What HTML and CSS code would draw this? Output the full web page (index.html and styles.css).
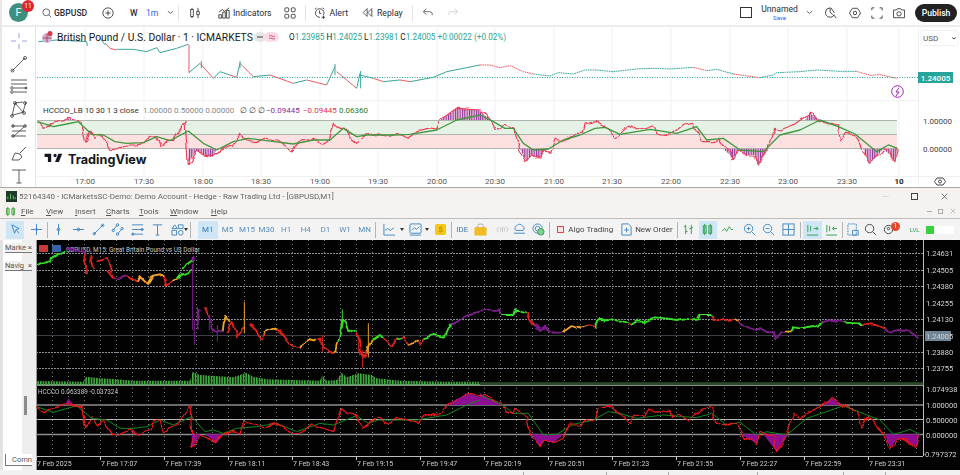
FILE: index.html
```html
<!DOCTYPE html>
<html lang="en">
<head>
<meta charset="utf-8">
<title>GBPUSD</title>
<link rel="stylesheet" href="styles.css">
</head>
<body>
<div class="page">
<section class="tv">
  <header class="tv-top">
    <div class="avatar">F<span class="avatar-badge">11</span></div>
    <div class="tv-item symbol">
      <svg class="ic14 sm" viewBox="0 0 14 14"><circle cx="6" cy="6" r="4.800"/><path d="M9.500 9.500L13 13"/></svg><b>GBPUSD</b>
    </div>
    <svg class="ic14 plus" viewBox="0 0 14 14"><circle cx="7" cy="7" r="6"/><path d="M7 4v6M4 7h6"/></svg>
    <span class="tf-w">W</span><span class="tf-m">1m</span>
    <svg class="chev c1" viewBox="0 0 8 5"><path d="M1 1l3 2.500L7 1"/></svg>
    <i class="tv-sep s1"></i>
    <svg class="ic14 candle" viewBox="0 0 14 14"><path d="M3.500 1v12M10.500 1v12"/><rect x="2" y="3" width="3" height="8" fill="#fff"/><path d="M9 5h3v4H9z" fill="#fff"/></svg>
    <div class="tv-item ind">
      <svg class="ic14" viewBox="0 0 14 14"><path d="M1 13V9h3v4zM5.500 13V6h3v7zM10 13V4h3v9z"/><path d="M1 6l4-3 3 2 5-4"/></svg><span>Indicators</span>
    </div>
    <svg class="ic14 grid4" viewBox="0 0 14 14"><rect x="1" y="1" width="4.500" height="4.500" rx="1"/><rect x="8.500" y="1" width="4.500" height="4.500" rx="1"/><rect x="1" y="8.500" width="4.500" height="4.500" rx="1"/><rect x="8.500" y="8.500" width="4.500" height="4.500" rx="1"/></svg>
    <i class="tv-sep s2"></i>
    <div class="tv-item alert">
      <svg class="ic14" viewBox="0 0 14 14"><path d="M11 9.500A5 5 0 1 0 7 12M6.500 4v3.500h2M1 2.500L3 1M12 2.500L10 1M11 10v4M9 12h4"/></svg><span>Alert</span>
    </div>
    <div class="tv-item replay">
      <svg class="ic14 sm1" viewBox="0 0 14 14"><path d="M6.500 2L1.500 7l5 5zM12.500 2l-5 5 5 5z"/></svg><span>Replay</span>
    </div>
    <i class="tv-sep s3"></i>
    <svg class="ic14 undo" viewBox="0 0 14 14"><path d="M5 2L1.500 5.500 5 9M2 5.500h7q3 0 3 3v1"/></svg>
    <svg class="ic14 redo" viewBox="0 0 14 14"><path d="M9 2l3.500 3.500L9 9M12 5.500H5q-3 0-3 3v1"/></svg>
    <div class="tv-right">
      <i class="layout-box"></i>
      <div class="unnamed"><span>Unnamed</span><em>Save</em></div>
      <svg class="chev c2" viewBox="0 0 8 5"><path d="M1 1l3 2.500L7 1"/></svg>
      <svg class="ic14 rr1" viewBox="0 0 14 14"><path d="M6 1a5.500 5.500 0 1 0 5 8M6 1v5l3 3M7 1l4 6M10 9l3 4"/></svg>
      <svg class="ic14 rr1" viewBox="0 0 14 14"><path d="M4 1.500h6L13.500 7 10 12.500H4L.5 7z"/><circle cx="7" cy="7" r="2"/></svg>
      <svg class="ic14 rr2" viewBox="0 0 14 14"><path d="M1 4V1h3M10 1h3v3M13 10v3h-3M4 13H1v-3"/></svg>
      <svg class="ic14 rr2" viewBox="0 0 14 14"><path d="M.5 3.500h3.500L5 2h4l1 1.500h3.500v9H.5z"/><circle cx="7" cy="8" r="2.500"/></svg>
      <button class="publish">Publish</button>
    </div>
  </header>
  <div class="tv-body">
    <aside class="tv-left">
      <svg class="tool" viewBox="0 0 20 20"><path class="cross" d="M10 2v5M10 13v5M2 10h5M13 10h5"/></svg>
      <svg class="tool" viewBox="0 0 20 20"><path d="M3 17L16 4"/><circle cx="3.500" cy="16.500" r="1.500"/><circle cx="16" cy="4" r="1.500"/></svg>
      <svg class="tool" viewBox="0 0 20 20"><path d="M2 4h16M2 8h16M5 12h13M5 16h13"/><circle cx="3" cy="12" r="1.300"/><circle cx="3" cy="16" r="1.300"/><circle cx="17" cy="12" r="1"/></svg>
      <svg class="tool" viewBox="0 0 20 20"><path d="M3 17L6 4l8 9L17 3M4 16l11-3M6 4l8-1"/><circle cx="6" cy="4" r="1.400"/><circle cx="3" cy="17" r="1.400"/><circle cx="15" cy="14" r="1.400"/><circle cx="16" cy="4" r="1.400"/></svg>
      <svg class="tool" viewBox="0 0 20 20"><path d="M3 5h14M3 10h14M3 15h14M5 15l10-9"/><circle cx="4" cy="5" r="1.300"/><circle cx="4" cy="15" r="1.300"/><circle cx="16" cy="5" r="1.300"/></svg>
      <svg class="tool" viewBox="0 0 20 20"><path d="M3 16l3-7 5 1 2 3-3 3zM11 9l6-6"/></svg>
      <svg class="tool" viewBox="0 0 20 20"><path d="M3 4h14M10 4v13M7.500 17h5"/></svg>
    </aside>
    <svg class="tv-chart" viewBox="36 27 924 160">
      <defs>
        <pattern id="stripes" patternUnits="userSpaceOnUse" width="7" height="8"><rect width="7" height="8" fill="#e6bfd8"/><rect width="3" height="8" fill="#8c2f96"/></pattern>
        <pattern id="volbars" patternUnits="userSpaceOnUse" width="8" height="8"><rect width="5" height="8" fill="#3fae3f"/></pattern>
        <filter id="jag" filterUnits="userSpaceOnUse" primitiveUnits="userSpaceOnUse" x="-200" y="-200" width="3400" height="1400"><feTurbulence type="fractalNoise" baseFrequency=".035" numOctaves="1" seed="4" result="n"/><feDisplacementMap in="SourceGraphic" in2="n" scale="22" xChannelSelector="R" yChannelSelector="G"/></filter>
      </defs>
      <path class="tv-grid" d="M85 27v149M144 27v149M203 27v149M261 27v149M320 27v149M378 27v149M437 27v149M495 27v149M554 27v149M612 27v149M671 27v149M730 27v149M788 27v149M847 27v149M899 27v149M37 100.500h881M918.500 27v160M37 176.500h923"/>
      <path class="tv-last" d="M37 77.500h881"/>
      <g transform="scale(.33333)">
        <path class="tv-price up" d="M115 125L170 120 260 125 262 138M300 115L316 135M350 148L400 148 440 155 470 143 480 158 530 145 565 133"/>
        <path class="tv-price dn" d="M316 130L330 145 350 150M567 133V218M600 190L640 235M690 225L710 232M720 190L760 230M810 225L880 250M920 240L980 255M1010 215L1070 265M1120 235L1150 245M1200 240L1230 245"/>
        <path class="tv-price up" d="M567 218L600 190M604 183V205M640 235L660 215L690 225M710 232L720 190M720 183V205M760 230L810 225M880 250L920 240M980 255L1005 200M1005 192V225M1070 265L1080 220M1082 213V265M1080 225L1120 235M1150 245L1200 240M1230 245L1300 232L1340 215L1440 195"/>
        <path class="tv-price dn dash" d="M1440 195L1470 195 1500 203 1530 197 1570 215 1600 222"/>
        <path class="tv-price up dash" d="M1600 222L1650 228 1675 218 1720 222 1755 210 1790 210 1840 215 1910 207 1960 205 2010 207 2080 202"/>
        <path class="tv-price dn dash" d="M2080 202L2120 212M2200 222L2280 233"/>
        <path class="tv-price up dash" d="M2120 212L2150 208 2200 222M2280 233L2320 225 2330 218 2400 215 2450 210 2520 214 2570 214"/>
        <path class="tv-price dn dash" d="M2570 214L2610 226 2640 224 2690 235"/>
      </g>
      <rect class="band-g" x="37" y="120" width="860" height="14.300"/>
      <rect class="band-r" x="37" y="134.300" width="860" height="14.400"/>
      <path class="band-line" d="M37 120.500h860M37 134.500h860M37 148.500h860"/>
      <g transform="translate(0,100) scale(.33333)">
        <path class="hist" d="M195 60L205 55 220 60zM565 146V190L590 150 610 165 640 170 650 146zM1320 60L1370 25 1440 30V60z"/>
        <path class="osc-r" d="M112 65L135 85 150 72 190 62 205 55 240 65 255 127 270 90 285 115 305 105 330 148 355 150 380 135 410 135 440 130 450 108 470 107 480 142 500 120 520 122 555 65 565 190 590 150 610 165 640 170 660 150 680 140 700 135 720 105 745 120 770 125 800 115 830 120 875 150 900 125 940 115 970 130 985 120 1000 70 1020 85 1040 85 1050 115 1070 130 1100 105 1130 100 1160 108 1190 100 1225 115 1240 95 1280 85 1310 90 1320 60 1370 25 1440 30"/>
        <path class="osc-g" d="M112 65L160 80 200 72 235 65 275 103 310 105 345 125 380 130 430 128 470 110 510 122 565 93 610 130 650 150 700 125 745 115 800 122 880 132 940 120 990 120 1030 85 1070 110 1100 105 1180 105 1230 103 1310 90 1370 60 1440 45"/>
      </g>
      <g transform="translate(480,100) scale(.33333)">
        <path class="hist" d="M0 35V60H35zM120 146L140 185 155 165 180 175 190 155 210 146zM730 146L760 175 780 150 800 165 825 165 835 195 860 146zM975 60L990 40 1020 60zM1150 146L1165 190 1190 170 1210 146 1225 160 1245 185 1252 146z"/>
        <path class="osc-r" d="M0 35L20 45 35 65 45 85 65 88 75 72 100 85 120 150 140 185 155 165 180 175 190 155 210 160 225 115 255 120 285 100 310 100 315 72 350 65 375 80 405 115 420 95 450 75 470 90 520 75 530 100 570 105 610 75 635 70 650 90 670 125 700 125 720 115 760 175 780 150 800 165 825 165 835 195 860 150 885 85 900 90 940 75 990 40 1020 60 1040 70 1075 78 1082 125 1100 100 1125 105 1165 190 1190 170 1210 145 1225 160 1245 185 1252 145"/>
        <path class="osc-g" d="M0 45L40 65 75 85 100 85 130 130 160 150 205 147 250 120 300 105 345 85 375 82 420 103 510 88 590 100 650 80 680 120 730 115 780 150 850 155 900 105 960 90 1020 60 1075 80 1125 102 1190 155 1225 135 1252 145"/>
      </g>
      <g class="flag"><circle cx="47" cy="38" r="5" fill="#c8b6d6"/><circle cx="50" cy="33.500" r="2.500" fill="#d23b4a"/><path d="M43 38h8M47 34v8" stroke="#c23b5a"/></g>
      <text class="tv-title" x="57" y="41">British Pound / U.S. Dollar · 1 · ICMARKETS</text>
      <rect class="pill-a" x="254" y="32" width="12" height="10" rx="5"/>
      <rect class="pill-b" x="264" y="32" width="15" height="10" rx="5"/>
      <path class="pill-a-g" d="M257 37h6"/>
      <path class="pill-b-g" d="M269 36q1.500-1 3 0t3 0M269 38.500q1.500-1 3 0t3 0"/>
      <text class="ohlc" x="289" y="40"><tspan class="blk">O</tspan>1.23985 <tspan class="blk">H</tspan>1.24025 <tspan class="blk">L</tspan>1.23981 <tspan class="blk">C</tspan>1.24005 +0.00022 (+0.02%)</text>
      <text class="ind-t" x="43" y="113">HCCCO_LB 10 30 1 3 close</text>
      <text class="ind-g" x="143" y="113">1.00000 0.50000 0.00000</text>
      <text class="ind-t" x="240" y="113">∅ ∅ ∅</text>
      <text class="ind-p" x="266" y="113">−0.09445</text>
      <text class="ind-r" x="303" y="113">−0.09445</text>
      <text class="ind-gr" x="339" y="113">0.06360</text>
      <path class="logo-tv" transform="translate(43.500,150.500) scale(.55)" d="M14 6H2v6h6v9h6V6zm14 15h-7l6-15h7l-6 15zm-7-9a3 3 0 1 0 0-6 3 3 0 0 0 0 6z"/>
      <text class="logo-text" x="68" y="163.500">TradingView</text>
      <g class="time">
        <text x="85" y="184">17:00</text><text x="144" y="184">17:30</text><text x="203" y="184">18:00</text><text x="261" y="184">18:30</text><text x="320" y="184">19:00</text><text x="378" y="184">19:30</text><text x="437" y="184">20:00</text><text x="495" y="184">20:30</text><text x="554" y="184">21:00</text><text x="612" y="184">21:30</text><text x="671" y="184">22:00</text><text x="730" y="184">22:30</text><text x="788" y="184">23:00</text><text x="847" y="184">23:30</text><text class="ten" x="899" y="184">10</text>
      </g>
      <rect class="usd-box" x="921" y="30.500" width="37" height="15" rx="2"/>
      <text class="usd" x="923" y="41">USD</text>
      <path class="usd-ch" d="M952 37.500l2 1.500 2-1.500"/>
      <rect class="tag" x="918" y="72" width="35" height="11"/>
      <text class="tag-t" x="935.500" y="80.500">1.24005</text>
      <text class="axis" x="923" y="124">1.00000</text>
      <text class="axis" x="923" y="152">0.00000</text>
      <circle class="bolt-c" cx="897.500" cy="91.500" r="5.800"/>
      <path class="bolt" d="M899 87.500L896 92h3l-3 4"/>
      <path class="gear" d="M937 178h6l2.500 3.500-2.500 3.500h-6l-2.500-3.500z"/>
      <circle class="gear" cx="940" cy="181.500" r="1.500"/>
    </svg>
  </div>
</section>
<section class="mt">
  <div class="mt-title">
    <svg class="mt-logo" viewBox="0 0 12 12"><rect width="12" height="12" fill="#1d3a2a"/><path d="M2 9V6M5 9V3M8 9V5M10 9V7" stroke="#6fcf6f"/></svg>
    <span>52164340 - ICMarketsSC-Demo: Demo Account - Hedge - Raw Trading Ltd - [GBPUSD,M1]</span>
    <div class="win-btns"><i class="wb-min"></i><i class="wb-max"></i><svg class="wb-x" viewBox="0 0 10 10"><path d="M1 1l8 8M9 1L1 9"/></svg></div>
  </div>
  <div class="mt-menu">
    <svg class="mt-menuicon" viewBox="0 0 12 12"><path d="M3 1v10M9 1v10"/><rect x="1.500" y="3" width="3" height="6"/><rect x="7.500" y="3" width="3" height="6"/></svg>
    <nav class="menu-items m1"><u>F</u>ile</nav>
    <nav class="menu-items m2"><u>V</u>iew</nav>
    <nav class="menu-items m3"><u>I</u>nsert</nav>
    <nav class="menu-items m4"><u>C</u>harts</nav>
    <nav class="menu-items m5"><u>T</u>ools</nav>
    <nav class="menu-items m6"><u>W</u>indow</nav>
    <nav class="menu-items m7"><u>H</u>elp</nav>
    <div class="sub-btns"><i class="sb-min"></i><i class="sb-res"></i><svg class="sb-x" viewBox="0 0 8 8"><path d="M1 1l6 6M7 1L1 7"/></svg></div>
  </div>
  <div class="mt-tools">
    <span class="tb hl w18"><svg class="ti" viewBox="0 0 14 14"><path d="M3 2l8 4-3.500 1.200L6 11z"/><path d="M8 8l3 3"/></svg></span>
    <span class="tb w24"><svg class="ti" viewBox="0 0 14 14"><path d="M7 1v12M1 7h12"/><circle cx="7" cy="7" r="1"/></svg></span>
    <i class="mt-sep tight"></i>
    <span class="tb w20"><svg class="ti" viewBox="0 0 14 14"><path d="M7 1v12"/><circle cx="7" cy="7" r="1.500"/></svg></span>
    <span class="tb w20"><svg class="ti" viewBox="0 0 14 14"><path d="M1 7h12"/><circle cx="7" cy="7" r="1.500"/></svg></span>
    <span class="tb w20"><svg class="ti" viewBox="0 0 14 14"><path d="M2 12L12 2"/><circle cx="2.500" cy="11.500" r="1.300"/><circle cx="11.500" cy="2.500" r="1.300"/></svg></span>
    <span class="tb w19"><svg class="ti" viewBox="0 0 14 14"><path d="M2 8l5-6M7 12l5-6"/><circle cx="2.500" cy="8" r="1.300"/><circle cx="7" cy="12" r="1.300"/><circle cx="7" cy="2" r="1.300"/><circle cx="12" cy="6" r="1.300"/></svg></span>
    <span class="tb w20"><svg class="ti" viewBox="0 0 14 14"><path d="M1 2h12M1 7h12M1 12h12"/><circle cx="2" cy="12" r="1.200"/><circle cx="12" cy="7" r="1.200"/></svg></span>
    <span class="tb w20"><svg class="ti" viewBox="0 0 14 14"><path d="M2 2h10M7 2v11M5 13h4"/></svg></span>
    <span class="tb w20"><svg class="ti" viewBox="0 0 14 14"><path d="M1 6l3-4 3 4zM8 2h5v4H8zM1 8h5v5H1z"/><circle cx="10.500" cy="10.500" r="2.500"/></svg></span>
    <i class="arrow pull"></i>
    <i class="mt-sep ml2 mr7"></i>
    <span class="tf hl">M1</span><span class="tf">M5</span><span class="tf">M15</span><span class="tf">M30</span><span class="tf">H1</span><span class="tf">H4</span><span class="tf">D1</span><span class="tf">W1</span><span class="tf">MN</span>
    <i class="mt-sep ml1"></i>
    <span class="tb w20 ml3"><svg class="ti" viewBox="0 0 14 14"><path d="M1 1v12h12"/><path d="M2 8l3-2 3 2 4-3"/></svg></span>
    <i class="arrow ml1"></i>
    <span class="tb w20 ml1"><svg class="ti" viewBox="0 0 14 14"><rect x="1" y="1" width="12" height="10" rx="1"/><path d="M3 8l3-3 2 2 3-3M1 13h12"/></svg></span>
    <i class="arrow"></i>
    <span class="coin ml6">$</span>
    <i class="mt-sep ml5"></i>
    <span class="ide">IDE</span>
    <span class="tb w16"><svg class="ti" viewBox="0 0 14 14"><path class="lock" d="M1 5h12v8H1z"/><path class="lock-s" d="M4 5V3q0-2 3-2t3 2v2"/></svg></span>
    <span class="tb w16 ml6"><svg class="ti dim" viewBox="0 0 14 14"><path d="M3 4l-2 3 2 3M11 4l2 3-2 3M5 5v4M7 4v6M9 5v4"/></svg></span>
    <span class="tb w18"><svg class="ti" viewBox="0 0 14 14"><path d="M3 8a3 3 0 0 1 1-5 3.500 3.500 0 0 1 6 0 3 3 0 0 1 1 5zM1 11h12"/></svg></span>
    <span class="tb w20"><svg class="ti" viewBox="0 0 14 14"><circle cx="6" cy="6" r="5"/><circle cx="6" cy="6" r="2.500"/><circle class="gdot" cx="9.500" cy="9.500" r="3.500"/></svg></span>
    <i class="mt-sep ml1"></i>
    <span class="algo ml7"><i class="algo-box"></i>Algo Trading</span>
    <span class="neworder ml7"><svg class="ti" viewBox="0 0 14 14"><path d="M2 1h7l3 3v9H2z"/><path d="M7 5v5M4.500 7.500h5"/></svg>New Order</span>
    <i class="mt-sep ml4"></i>
    <span class="tb w20 ml1"><svg class="ti g" viewBox="0 0 14 14"><path d="M4 2v10M2 4h2M4 9h2M10 2v10M8 6h2M10 5h2"/></svg></span>
    <span class="tb hl w18"><svg class="ti g" viewBox="0 0 14 14"><path d="M4 1v12M10 1v12"/><rect x="2.500" y="3" width="3" height="8"/><rect x="8.500" y="3" width="3" height="8"/></svg></span>
    <span class="tb w20 ml1"><svg class="ti g" viewBox="0 0 14 14"><path d="M1 9l3-3 2 3 3-5 2 3h2"/></svg></span>
    <span class="tb w22 ml1"><svg class="ti" viewBox="0 0 14 14"><circle cx="6" cy="6" r="4.500"/><path d="M4 6h4M6 4v4M9.500 9.500L13 13"/></svg></span>
    <span class="tb w16"><svg class="ti" viewBox="0 0 14 14"><circle cx="6" cy="6" r="4.500"/><path d="M4 6h4M9.500 9.500L13 13"/></svg></span>
    <span class="tb w20 ml2"><svg class="ti" viewBox="0 0 14 14"><rect x="1" y="1" width="12" height="12"/><path d="M7 1v12M1 7h12"/></svg></span>
    <i class="mt-sep ml1"></i>
    <span class="tb hl w19 ml2"><svg class="ti g" viewBox="0 0 14 14"><path d="M2 2v8M5 3v6M8 6h5M11 4l2 2-2 2M1 13h12"/></svg></span>
    <span class="tb w20"><svg class="ti g" viewBox="0 0 14 14"><path d="M2 2v8M5 3v6M8 6h5M10 4L8 6l2 2M1 13h12"/></svg></span>
    <i class="mt-sep"></i>
    <span class="tb w18 ml2"><svg class="ti" viewBox="0 0 14 14"><path stroke-dasharray="2 1" d="M1 1h9v12H1z"/><path d="M6 8h6v5H6z"/></svg></span>
    <span class="tb w16"><svg class="ti k" viewBox="0 0 14 14"><circle cx="6" cy="6" r="4.500"/><path d="M9.500 9.500L13 13"/></svg></span>
    <span class="tb w20 badge-host"><svg class="ti k" viewBox="0 0 14 14"><circle cx="7" cy="7" r="4.500"/><circle cx="7" cy="6" r="1.300"/></svg><span class="mt-badge">1</span></span>
    <span class="lvl ml11">LVL</span>
    <i class="lvl-g"></i><i class="lvl-w"></i>
  </div>
  <div class="mt-main">
    <aside class="mt-left">
      <div class="dock"><span>Marke</span><b>×</b></div>
      <div class="dock d2"><span>Navig</span><b>×</b></div>
      <i class="dock-scroll"></i>
      <div class="comn">Comn</div>
    </aside>
    <svg class="mt-chart" viewBox="36 240 924 230">
      <defs>
        <pattern id="dotv" patternUnits="userSpaceOnUse" x="52" y="240" width="16" height="4"><rect width="1" height="1" fill="#77807a"/></pattern>
      </defs>
      <rect class="mt-bg" x="36" y="240" width="924" height="230"/>
      <rect fill="url(#dotv)" x="36" y="240" width="887" height="216"/>
      <path class="h-dot" d="M36 253.500h887M36 270.500h887M36 286.500h887M36 319.500h887M36 352.500h887M36 368.500h887"/>
      <path class="h-sol" d="M36 335.500h887"/>
      <path class="frame" d="M36.500 240v230"/>
      <path class="frame-r" d="M923.500 240v216M36 456.500h887"/>
      <path class="sepbar" d="M36 385h887"/>
      <rect class="flag1" x="39" y="245" width="9" height="7"/>
      <rect class="flag2" x="52" y="245" width="9" height="7"/>
      <text class="mt-label" x="66" y="252">GBPUSD, M15: Great Britain Pound vs US Dollar</text>

      <g transform="scale(.33333)">
        <path class="s g1" d="M114 795L150 780 195 750M550 810L565 790 578 780"/>
        <path class="s p1" d="M200 745L225 750 250 760M578 815V770"/>
        <path class="s r1" d="M250 760L258 790M258 825V775M270 760L280 810M290 785L320 775 335 815"/>
      </g>
      <g transform="translate(0,270) scale(.33333)">
        <path class="s r1" d="M320 0L340 25M380 15L410 35M425 25L445 45M490 15L495 50 520 35"/>
        <path class="s p1" d="M340 25L360 25 380 15M600 120L590 175M625 135L640 180 652 190 665 185"/>
        <path class="s o1" d="M410 35L420 20 435 35 445 45M445 45L460 20 485 15 490 15M520 35L535 30"/>
        <path class="s g1" d="M535 30L550 10 575 0"/>
        <path class="w p1" d="M578 0V180M583 150V225M592 110V175M628 135V180M652 165V215"/>
        <path class="s r1" d="M612 105L620 130 625 135"/>
        <path class="s o1" d="M665 185L668 160 675 140 690 155M795 190L800 185 825 175 830 180M900 235L905 222 925 210 945 215 950 210M1000 250L1010 240 1015 215M1115 210L1105 235 1098 250"/>
        <path class="s r1" d="M680 185L695 155 710 200 725 180 733 175M745 160L755 165 770 180 780 205 795 190M830 180L860 205 880 230 900 235M950 210L965 205 970 235 1000 250M1070 180L1075 200 1080 240 1090 265 1100 240M1150 205L1155 210 1175 230 1185 210 1190 205M1205 210L1210 205 1225 225 1235 220M1250 210L1260 225 1270 205"/>
        <path class="w r1" d="M968 195V245M1075 195V245M1088 240V292"/>
        <path class="w o1" d="M733 95V190M1105 160V262"/>
        <path class="s g1" d="M1015 215L1027 150 1035 160 1045 190 1070 180M1115 210L1125 205 1140 195 1150 205M1190 205L1205 210M1270 205L1300 195 1335 200 1345 175 1355 165"/>
        <path class="w g1" d="M1027 118V175"/>
        <path class="s o1" d="M1225 225L1235 220 1250 210"/>
        <path class="s p1" d="M1355 165L1360 165 1400 135 1440 125"/>
        <path class="vol" d="M110 345V333L250 335 258 320 300 325 350 328 400 332 570 332 578 305 600 315 700 322 738 308 760 320 800 328 960 332 967 315 980 332 1010 330 1025 308 1040 322 1075 310 1115 315 1130 325 1200 332 1340 335 1440 335V345z"/>
      </g>
      <g transform="translate(480,270) scale(.33333)">
        <path class="s p1" d="M0 125L60 118 70 135M160 165L165 165 180 180 195 170 220 185 250 185M780 158L785 165 830 180 875 185 890 205 905 190 915 188M1025 160L1030 158 1070 150 1085 155 1090 155M1215 175L1225 185 1260 180 1285 185 1315 205"/>
        <path class="s g1" d="M70 135L100 135 105 120 135 130M345 170H350V160L360 150 420 152 440 160M450 165L465 155 490 155 500 150 525 142 560 145 590 150 610 145 625 148M630 150L635 150 655 145 660 135 695 135 700 135M935 187L940 172 960 175 1000 168 1025 160M1090 155L1135 157 1145 165"/>
        <path class="s r1" d="M135 130L140 135 160 165M320 165L345 170M440 160L450 165M625 148L635 150M700 135V150L720 155 755 150 760 150M775 155L780 158M1145 165L1150 160 1190 165 1215 175"/>
        <path class="s o1" d="M250 185L258 180 275 168 295 175 320 165M760 150L775 155M915 188L935 187"/>
        <path class="vol-dim" d="M0 345V337L1330 337V345z"/>
      </g>

      <path class="osc-l" d="M36 405h887M36 434.500h887"/>
      <path class="osc-m" d="M36 419.500h887"/>
      <g transform="translate(0,375) scale(.33333)">
        <path class="hist2" d="M195 90L205 70 220 90zM575 178V220L590 195 600 178zM615 178L650 205 665 178zM1340 90L1365 75 1405 55 1440 65V90z"/>
        <path class="m-g" d="M110 95L160 112 230 92 275 130 320 135 360 160 400 160 440 155 480 135 520 150 575 125 615 170 640 165 670 175 710 160 770 155 830 145 890 170 960 145 1000 150 1070 122 1105 145 1135 135 1250 135 1340 120 1400 90 1440 75"/>
        <path class="m-r" d="M110 95L135 110 150 100 190 92 205 85 245 95 257 158 275 125 290 150 310 135 335 178 360 180 385 165 420 178 450 165 460 140 480 138 490 172 510 152 530 150 570 95 578 220 600 180 620 190 650 200 670 175 700 170 720 178 735 140 760 150 790 155 830 145 880 178 900 178 935 150 975 160 1000 170 1025 100 1040 118 1065 115 1085 160 1105 145 1135 128 1170 145 1190 130 1220 133 1255 145 1270 125 1300 113 1320 120 1350 80 1405 55 1440 65"/>
      </g>
      <g transform="translate(480,375) scale(.33333)">
        <path class="hist2" d="M0 55V90H65zM155 178L180 218 195 195 220 205 250 178zM780 178L830 205 840 178zM850 178L890 230 925 178zM1030 90L1055 68 1085 90zM1215 178L1230 220 1250 195 1270 190 1290 205 1310 215 1318 178z"/>
        <path class="m-g" d="M0 60L65 88 100 115 145 115 190 180 230 178 280 148 340 135 385 110 420 115 470 130 550 120 650 128 695 115 740 150 780 142 830 180 860 170 920 180 980 130 1040 110 1090 92 1135 110 1200 135 1240 178 1270 170 1290 163 1318 178"/>
        <path class="m-r" d="M0 65L30 65 65 85 75 110 100 118 105 100 130 115 155 180 180 215 195 195 220 205 250 190 265 150 300 150 320 132 345 135 355 100 385 100 392 95 420 115 450 145 465 120 490 125 505 105 530 115 550 105 570 110 575 130 600 120 625 135 670 105 690 100 710 145 730 155 750 145 775 150 795 190 830 205 840 175 880 180 890 230 915 190 940 115 960 125 1000 105 1055 70 1085 90 1130 108 1143 155 1160 130 1180 140 1215 185 1230 220 1250 195 1270 190 1290 205 1310 215 1318 180"/>
      </g>
      <text class="mt-label" x="38" y="394">HCCCO 0.063389 -0.037324</text>

      <rect class="price-tag" x="925" y="331" width="26" height="10"/>
      <g class="mt-axis">
        <text x="926" y="256">1.24631</text><text x="926" y="273">1.24505</text><text x="926" y="289">1.24380</text><text x="926" y="306">1.24255</text><text x="926" y="322">1.24130</text><text x="926" y="339">1.24005</text><text x="926" y="355">1.23880</text><text x="926" y="371">1.23755</text>
        <text x="926" y="392">1.074938</text><text x="926" y="408">1.000000</text><text x="926" y="423">0.500000</text><text x="926" y="438">0.000000</text><text x="923" y="457">-0.797372</text>
      </g>
      <path class="ticks" d="M36.500 457v3M100.500 457v3M164.500 457v3M228.500 457v3M292.500 457v3M356.500 457v3M420.500 457v3M484.500 457v3M548.500 457v3M612.500 457v3M676.500 457v3M740.500 457v3M804.500 457v3M868.500 457v3"/>
      <g class="mt-date">
        <text x="37" y="465.500">7 Feb 2025</text><text x="101" y="465.500">7 Feb 17:07</text><text x="165" y="465.500">7 Feb 17:39</text><text x="229" y="465.500">7 Feb 18:11</text><text x="293" y="465.500">7 Feb 18:43</text><text x="357" y="465.500">7 Feb 19:15</text><text x="421" y="465.500">7 Feb 19:47</text><text x="485" y="465.500">7 Feb 20:19</text><text x="549" y="465.500">7 Feb 20:51</text><text x="613" y="465.500">7 Feb 21:23</text><text x="677" y="465.500">7 Feb 21:55</text><text x="741" y="465.500">7 Feb 22:27</text><text x="805" y="465.500">7 Feb 22:59</text><text x="869" y="465.500">7 Feb 23:31</text>
      </g>
    </svg>
  </div>
  <footer class="mt-status"><i></i><i></i><i></i><i></i><i></i><i></i></footer>
</section>
</div>
</body>
</html>
```
FILE: styles.css
```css
* { box-sizing: border-box; }
html, body { margin: 0; padding: 0; }
body { width: 960px; height: 475px; overflow: hidden; background: #efefef; font-family: Roboto, "Liberation Sans", sans-serif; color: #2a2e39; }
i { display: block; flex: none; }
.page { display: flex; flex-direction: column; height: 475px; filter: blur(.3px); }
svg { display: block; flex: none; fill: none; stroke: currentColor; }

/* TradingView part */
.tv { height: 187px; display: flex; flex-direction: column; flex: none; }
.tv-top { height: 25px; flex: none; background: #fff; display: flex; align-items: center; padding-left: 7px; font-size: 8.700px; border-left: 2px solid #e8e8e8; }
.avatar { width: 19px; height: 19px; flex: none; border-radius: 50%; background: #3f8f80; color: #fff; font-size: 11px; display: flex; align-items: center; justify-content: center; position: relative; }
.avatar-badge { position: absolute; left: 13px; top: -3px; width: 12px; height: 12px; border-radius: 50%; background: #e0252f; color: #fff; font-size: 6.500px; line-height: 12px; text-align: center; }
.ic14 { width: 12px; height: 12px; stroke-width: 1; color: #333; }
.sm { width: 10px; height: 10px; }
.sm1 { width: 11px; height: 11px; }
.tv-item { display: flex; align-items: center; white-space: nowrap; flex: none; }
.symbol { margin-left: 14px; gap: 2px; }
.symbol b { font-weight: 500; font-size: 8.600px; width: 32px; }
.plus { margin-left: 16px; }
.tf-w { margin-left: 16px; font-weight: 500; font-size: 8.600px; width: 10px; }
.tf-m { margin-left: 6px; color: #2962ff; font-size: 8.600px; width: 14px; }
.chev { width: 7px; height: 5px; color: #555; }
.c1 { margin-left: 7px; }
.c2 { margin-left: 8px; }
.tv-sep { width: 1px; height: 16px; background: #e4e4e4; }
.s1 { margin-left: 4px; }
.candle { margin-left: 10px; }
.ind { margin-left: 17px; gap: 3px; }
.grid4 { margin-left: 12px; }
.s2 { margin-left: 9px; }
.alert { margin-left: 8px; gap: 4px; }
.replay { margin-left: 14px; gap: 4px; }
.s3 { margin-left: 9px; }
.undo { margin-left: 9px; color: #555; }
.redo { margin-left: 13px; color: #ccc; }
.tv-right { display: flex; align-items: center; margin-left: auto; padding-right: 3px; }
.layout-box { width: 12px; height: 11px; border: 1px solid #333; }
.unnamed { width: 37px; margin-left: 9px; display: flex; flex-direction: column; align-items: center; font-size: 8.600px; line-height: 9px; }
.unnamed em { font-style: normal; font-size: 6px; color: #2962ff; line-height: 7px; }
.rr1 { margin-left: 12px; }
.rr2 { margin-left: 10px; }
.publish { margin-left: 10px; width: 42px; height: 18px; border: 0; border-radius: 9px; background: #222; color: #fff; font: 500 8.600px Roboto, sans-serif; padding: 0; }

.tv-body { flex: 1; display: flex; border-top: 2px solid #ececec; min-height: 0; border-left: 2px solid #e8e8e8; }
.tv-left { width: 34px; flex: none; background: #fff; border-right: 1px solid #e4e4e4; display: flex; flex-direction: column; align-items: center; gap: 2.500px; padding-top: 4px; }
.tool { width: 20px; height: 20px; stroke-width: .8; color: #333; }
.cross { stroke: #7d8fd0; }
.tv-chart { width: 924px; height: 160px; background: #fff; stroke: none; }
.tv-grid { stroke: #f1f1f1; stroke-width: 1; }
.tv-last { stroke: #26a69a; stroke-dasharray: 1 1.500; }
.tv-price { stroke-width: 3; fill: none; }
.dash { stroke-dasharray: 5 2; }
.up { stroke: #38a59a; }
.dn { stroke: #ef5a62; }
.band-g { fill: #e5f2e5; }
.band-r { fill: #fde0e0; }
.band-line { stroke: #aeb4ae; stroke-width: 1; }
.hist { fill: url(#stripes); stroke: none; }
.osc-r { stroke: #ef3d55; stroke-width: 3.500; fill: none; stroke-linejoin: round; filter: url(#jag); }
.osc-g { stroke: #43973f; stroke-width: 4; fill: none; stroke-linejoin: round; }
.flag { stroke: none; }
.tv-chart text, .mt-chart text { stroke: none; }
.tv-title { font: 10.300px Roboto, sans-serif; fill: #131722; }
.pill-a { fill: #e6e6e6; }
.pill-b { fill: #fbdce4; }
.pill-a-g { stroke: #777; stroke-width: 1.500; }
.pill-b-g { stroke: #c25a7a; fill: none; }
.ohlc { font: 8.200px Roboto, sans-serif; fill: #2aa597; }
.blk { fill: #222; }
.ind-t { font: 8px Roboto, sans-serif; fill: #333; }
.ind-g { font: 8px Roboto, sans-serif; fill: #888; }
.ind-p { font: 8px Roboto, sans-serif; fill: #8a1f9a; }
.ind-r { font: 8px Roboto, sans-serif; fill: #e8304a; }
.ind-gr { font: 8px Roboto, sans-serif; fill: #257a2a; }
.logo-tv { fill: #131722; }
.logo-text { font: 700 12.700px Inter, Roboto, sans-serif; fill: #131722; }
.time text { font: 8px Roboto, sans-serif; fill: #555; text-anchor: middle; }
.time .ten { font-weight: 700; fill: #222; }
.usd-box { fill: #fff; stroke: #f0f0f0; }
.usd { font: 8px Roboto, sans-serif; fill: #555; }
.usd-ch { stroke: #555; fill: none; }
.tag { fill: #26a69a; }
.tag-t { font: 500 8px Roboto, sans-serif; fill: #fff; text-anchor: middle; }
.axis { font: 8px Roboto, sans-serif; fill: #444; }
.bolt-c { fill: #fff; stroke: #9c27b0; }
.bolt { stroke: #9c27b0; fill: none; }
.gear { stroke: #444; fill: none; }

/* MT5 window */
.mt { flex: 1; display: flex; flex-direction: column; min-height: 0; border-top: 1px solid #a8a8a8; background: #f6f2f0; }
.mt-title { height: 16px; flex: none; display: flex; align-items: center; padding-left: 6px; gap: 2px; font: 8px Roboto, sans-serif; color: #666; white-space: nowrap; }
.mt-logo { width: 11px; height: 11px; stroke: none; }
.win-btns { margin-left: auto; display: flex; align-items: center; padding-right: 12px; }
.wb-min { width: 7px; height: 1px; background: #ddd; }
.wb-max { width: 7px; height: 7px; border: 1px solid #444; margin-left: 22px; }
.wb-x { width: 7px; height: 7px; margin-left: 23px; color: #444; }
.mt-menu { height: 15px; flex: none; display: flex; align-items: center; padding-left: 5px; font: 8px Roboto, sans-serif; color: #555; border-bottom: 1px solid #bcbcbc; }
.mt-menuicon { width: 11px; height: 11px; color: #3ea83e; margin-right: 5px; }
.menu-items { flex: none; }
.m1 { width: 25px; } .m2 { width: 29px; } .m3 { width: 31px; } .m4 { width: 33px; } .m5 { width: 31px; } .m6 { width: 41px; } .m7 { width: 20px; }
.sub-btns { margin-left: auto; display: flex; align-items: center; padding-right: 4px; opacity: .45; }
.sb-min { width: 5px; height: 1px; background: #555; }
.sb-res { width: 5px; height: 5px; border: 1px solid #555; margin-left: 6px; }
.sb-x { width: 6px; height: 6px; margin-left: 7px; color: #555; }

.mt-tools { height: 21px; flex: none; background: #f3f3f3; display: flex; align-items: center; padding-left: 6px; font: 8px Roboto, sans-serif; color: #3c78a8; overflow: hidden; white-space: nowrap; }
.tb { display: flex; align-items: center; justify-content: center; flex: none; height: 18px; }
.hl { background: #cfe6f7; }
.w16 { width: 16px; } .w18 { width: 18px; } .w19 { width: 19px; } .w20 { width: 20px; } .w22 { width: 22px; } .w24 { width: 24px; }
.ml1 { margin-left: 1px; } .ml2 { margin-left: 2px; } .ml3 { margin-left: 3px; } .ml4 { margin-left: 4px; } .ml5 { margin-left: 5px; } .ml6 { margin-left: 6px; } .ml7 { margin-left: 7px; } .ml11 { margin-left: 11px; }
.mr7 { margin-right: 7px; }
.ti { width: 13px; height: 13px; color: #3f86c4; stroke-width: 1; }
.ti.g { color: #2d9e4e; }
.ti.k { color: #444; }
.ti.dim { color: #c4c4c4; }
.lock { fill: #f2bd24; stroke: #f2bd24; }
.lock-s { stroke: #aaa; }
.gdot { fill: #7fd38f; stroke: #2f9e4f; }
.mt-sep { width: 1px; height: 16px; background: #b4b4b4; }
.tight { margin-left: -1px; }
.arrow { width: 0; height: 0; border: 2.500px solid transparent; border-top: 3px solid #333; border-bottom: 0; }
.pull { margin-left: -3px; }
.tf { width: 19.600px; height: 18px; display: flex; align-items: center; justify-content: center; flex: none; color: #5b8fc0; }
.tf.hl { color: #2f7cc0; }
.coin { width: 11px; height: 11px; background: #f5c518; border-radius: 2px; color: #a87b00; font-size: 8px; text-align: center; line-height: 11px; flex: none; }
.ide { width: 20px; text-align: center; flex: none; }
.algo { display: flex; align-items: center; gap: 4px; color: #444; flex: none; }
.algo-box { width: 7px; height: 7px; border: 1px solid #e0484c; background: #fbe3e3; }
.neworder { display: flex; align-items: center; gap: 2px; color: #444; flex: none; }
.badge-host { position: relative; }
.mt-badge { position: absolute; right: -1px; top: 1px; width: 9px; height: 9px; border-radius: 50%; background: #e5472a; color: #fff; font-size: 7px; line-height: 9px; text-align: center; }
.lvl { font-size: 6px; color: #2d9e4e; flex: none; width: 10px; }
.lvl-g { width: 8px; height: 8px; background: #37d13f; margin-left: 6px; }
.lvl-w { width: 20px; height: 8px; background: #fff; }

.mt-main { height: 230px; flex: none; display: flex; }
.mt-left { width: 36px; flex: none; position: relative; background: linear-gradient(90deg, #e2e2e2 0 3px, #fff 3px 22px, #eee 22px); display: flex; flex-direction: column; padding: 3px 0 0 5px; font: 7.500px Roboto, sans-serif; color: #555; }
.dock { display: flex; justify-content: space-between; align-items: center; width: 27px; height: 10px; background: #f0f0f0; border-bottom: 1px solid #777; line-height: 10px; }
.dock b { font-weight: 400; color: #333; }
.d2 { margin-top: 8px; }
.dock-scroll { position: absolute; left: 24px; top: 156px; width: 3px; height: 19px; background: #8c8c8c; }
.comn { position: absolute; left: 5px; top: 214px; width: 27px; height: 12px; background: #fff; border-left: 1px solid #777; border-bottom: 1px solid #777; padding-left: 6px; line-height: 12px; }
.mt-chart { width: 924px; height: 230px; stroke: none; }
.mt-bg { fill: #020202; }
.h-dot { stroke: #8e8e9a; stroke-dasharray: 2 1; stroke-width: 1; }
.h-sol { stroke: #3c3c44; }
.frame { stroke: #9a9a9a; }
.frame-r { stroke: #bdbdbd; }
.sepbar { stroke: #8a8a8a; stroke-width: 2; }
.flag1 { fill: #c8393b; }
.flag2 { fill: #3a62a8; }
.mt-label { font: 6.400px Roboto, sans-serif; fill: #c8c8c8; }
.s { stroke-width: 5.500; fill: none; stroke-linejoin: bevel; filter: url(#jag); }
.w { stroke-width: 3; fill: none; }
.g1 { stroke: #35e025; }
.p1 { stroke: #7f1e8f; }
.r1 { stroke: #e0201c; }
.o1 { stroke: #eea324; }
.vol { fill: url(#volbars); }
.vol-dim { fill: #2c4a2c; }
.osc-l { stroke: #8c8c8c; stroke-width: 1.500; }
.osc-m { stroke: #b5b5b5; stroke-width: 1; }
.hist2 { fill: #8c0f92; }
.m-g { stroke: #0e8a1a; stroke-width: 3; fill: none; }
.m-r { stroke: #f01818; stroke-width: 3.500; fill: none; stroke-linejoin: round; filter: url(#jag); }
.price-tag { fill: #6f8596; }
.mt-axis text { font: 7.500px Roboto, sans-serif; fill: #d4d4d4; }
.mt-date text { font: 7px Roboto, sans-serif; fill: #cfcfcf; }
.ticks { stroke: #ccc; }
.mt-status { flex: 1; background: #f1f1f1; display: flex; }
.mt-status i { width: 1px; height: 3px; margin-top: 2px; background: #aaa; }
.mt-status i:nth-child(1) { margin-left: 523px; }
.mt-status i:nth-child(2) { margin-left: 82px; }
.mt-status i:nth-child(3) { margin-left: 61px; }
.mt-status i:nth-child(4) { margin-left: 88px; }
.mt-status i:nth-child(5) { margin-left: 85px; }
.mt-status i:nth-child(6) { margin-left: 41px; }
```
